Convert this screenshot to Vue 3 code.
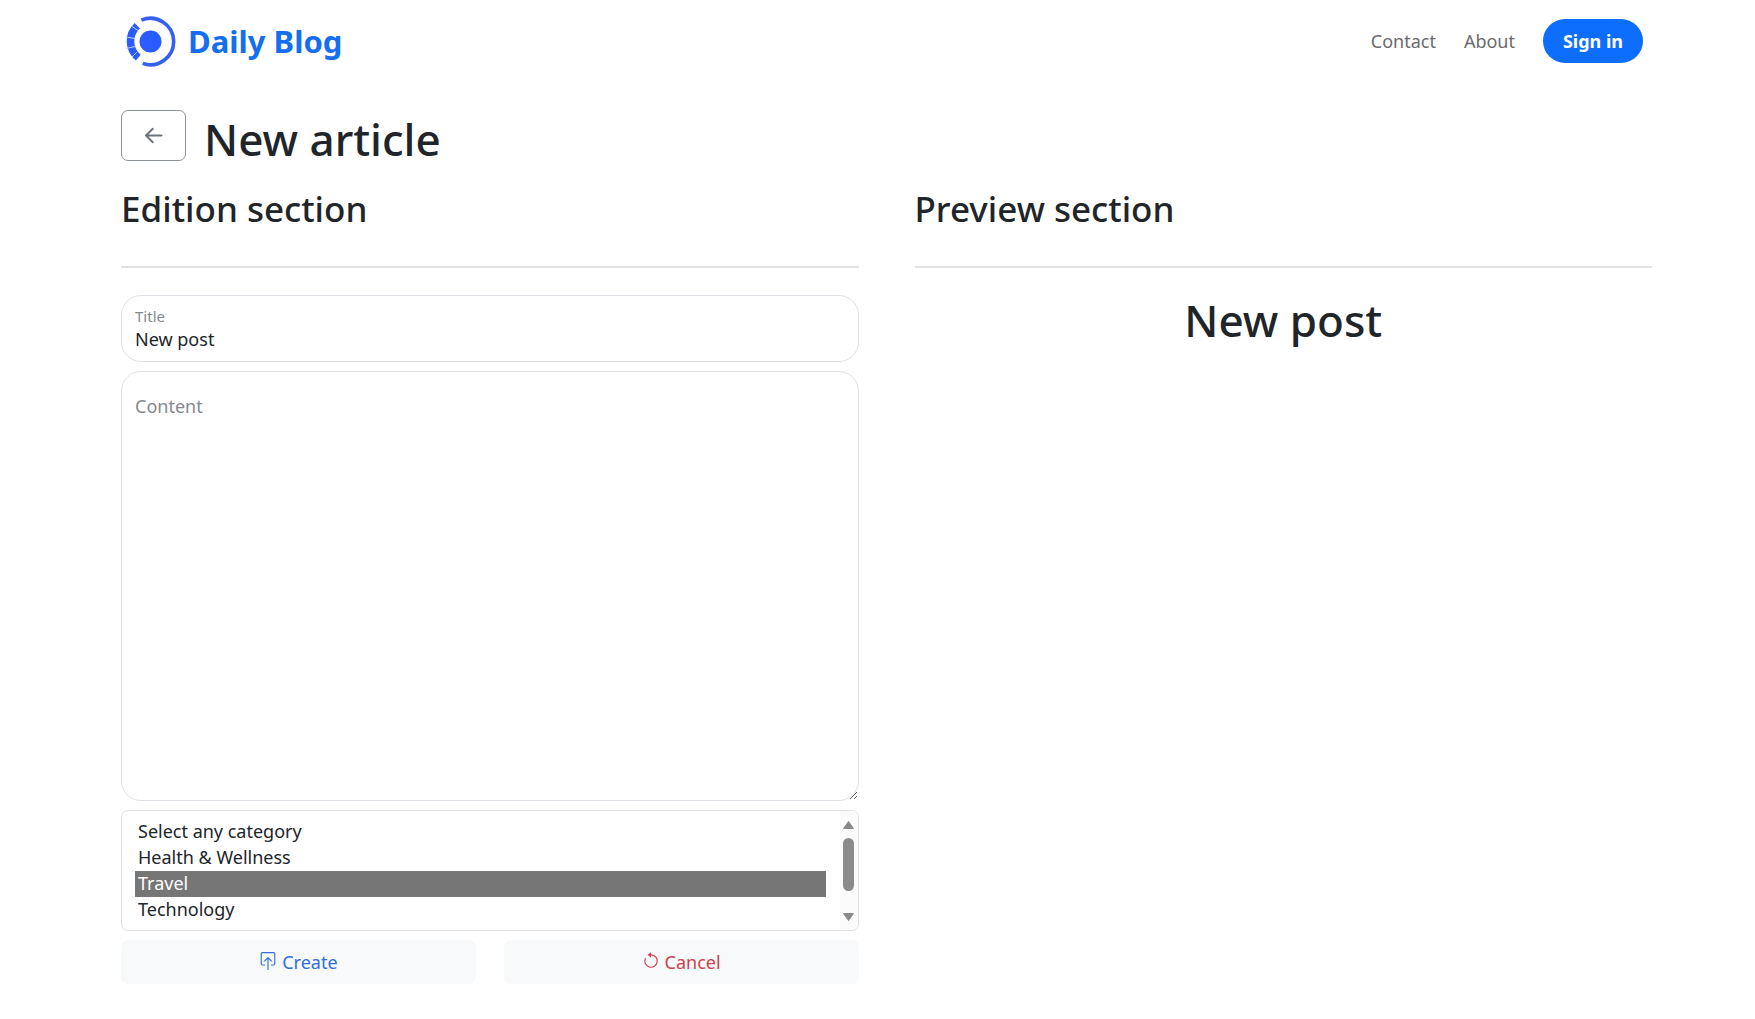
<script setup>
import { ref } from 'vue'

const title = ref('New post')
const content = ref('')
const category = ref('Travel')
const categories = ['Select any category', 'Health & Wellness', 'Travel', 'Technology', 'Sports', 'Food', 'Culture']
</script>

<template>
  <div class="page">
    <header class="navbar">
      <a class="brand" href="#">
        <svg class="logo" viewBox="0 0 52 52" aria-hidden="true">
          <circle cx="26.500" cy="26.500" r="11" fill="#2b5cff" />
          <path d="M17.300 5.200A23.200 23.200 0 1 1 18.700 48.400" fill="none" stroke="#3560f0" stroke-width="3.600" />
          <path d="M13.300 10.800A21 21 0 0 0 14.300 42.600" fill="none" stroke="#2b5cff" stroke-width="7.600" />
          <path d="M8 11.500l6 4M2 22l9 1.500M2 33.500l9-2M8 42l5-5" stroke="#b9c9ff" stroke-width="1" />
        </svg>
        <span>Daily Blog</span>
      </a>
      <nav class="links">
        <a href="#">Contact</a>
        <a href="#">About</a>
        <button class="signin" type="button">Sign in</button>
      </nav>
    </header>

    <main>
      <div class="heading">
        <button class="back" type="button" aria-label="Back">
          <svg width="20" height="20" viewBox="0 0 16 16" fill="none" stroke="#6c757d" stroke-width="1.600" stroke-linecap="round" stroke-linejoin="round" aria-hidden="true">
            <path d="M14 7.600H1.600M7 2.200L1.600 7.600L7 13" />
          </svg>
        </button>
        <h1>New article</h1>
      </div>

      <div class="columns">
        <section>
          <h2>Edition section</h2>
          <hr>
          <form @submit.prevent>
            <div class="field">
              <label class="small" for="title">Title</label>
              <input id="title" v-model="title" type="text">
            </div>
            <div class="field">
              <label v-if="!content" for="content">Content</label>
              <textarea id="content" v-model="content"></textarea>
            </div>
            <div class="listbox">
              <select v-model="category" size="4" aria-label="Category">
                <option v-for="name in categories" :key="name">{{ name }}</option>
              </select>
              <div class="scrollbar" aria-hidden="true">
                <svg width="13" height="10" viewBox="0 0 13 10"><path d="M6.500 1.500L11.500 8.500H1.500z" /></svg>
                <span class="thumb"></span>
                <svg width="13" height="10" viewBox="0 0 13 10"><path d="M6.500 8.500L11.500 1.500H1.500z" /></svg>
              </div>
            </div>
            <div class="actions">
              <button class="create" type="submit">
                <svg width="18" height="18" viewBox="0 0 16 16" fill="none" stroke="currentColor" stroke-linecap="round" stroke-linejoin="round" aria-hidden="true">
                  <path d="M5 11.500H3A1 1 0 0 1 2 10.500V1.500A1 1 0 0 1 3 .5h10A1 1 0 0 1 14 1.500v9a1 1 0 0 1-1 1h-2M8 15.500V5M5 8l3-3 3 3" />
                </svg>
                Create
              </button>
              <button class="cancel" type="reset">
                <svg width="18" height="18" viewBox="0 0 16 16" fill="currentColor" aria-hidden="true">
                  <path fill-rule="evenodd" d="M8 3a5 5 0 1 1-4.546 2.914.5.5 0 0 0-.908-.417A6 6 0 1 0 8 2z" />
                  <path d="M8 4.466V.534a.25.25 0 0 0-.41-.192L5.230 2.308a.25.25 0 0 0 0 .384l2.360 1.966A.25.25 0 0 0 8 4.466" />
                </svg>
                Cancel
              </button>
            </div>
          </form>
        </section>

        <section>
          <h2>Preview section</h2>
          <hr>
          <h1 class="preview">{{ title }}</h1>
        </section>
      </div>
    </main>
  </div>
</template>

<style>
body {
  margin: 0;
  background: #fff;
}
</style>

<style scoped>
* {
  box-sizing: border-box;
}

.page {
  padding: 0 103px 0 121px;
  color: #212529;
  font: 18px/28px "Segoe UI", "Noto Sans", sans-serif;
}

button,
input,
textarea,
select {
  margin: 0;
  color: inherit;
  font: inherit;
}

.navbar {
  display: flex;
  align-items: center;
  justify-content: space-between;
  height: 82px;
  padding: 0 9px 0 3px;
}

.brand {
  display: flex;
  align-items: center;
  gap: 12px;
  color: #146ef0;
  font-size: 31px;
  font-weight: 700;
  text-decoration: none;
}

.logo {
  width: 52px;
  height: 52px;
}

.links {
  display: flex;
  align-items: center;
  gap: 28px;
}

.links a {
  color: #6b6b6b;
  text-decoration: none;
}

.signin {
  width: 100px;
  height: 44px;
  padding: 0;
  border: 0;
  border-radius: 22px;
  background: #0d6efd;
  color: #fff;
  font-weight: 700;
}

.heading {
  display: flex;
  gap: 18px;
  margin-top: 28px;
}

.back {
  display: flex;
  align-items: center;
  justify-content: center;
  width: 65px;
  height: 51px;
  padding: 0;
  border: 1px solid #8d949a;
  border-radius: 7px;
  background: #fff;
}

h1,
h2 {
  margin: 0;
  font-weight: 500;
}

h1 {
  font-size: 44px;
  line-height: 58px;
}

h2 {
  font-size: 35px;
  line-height: 44px;
}

.columns {
  display: grid;
  grid-template-columns: 1fr 1fr;
  gap: 56px;
  margin-top: 19px;
}

hr {
  height: 2px;
  margin: 35px 0 27px;
  border: 0;
  background: #e0e1e2;
}

.field {
  position: relative;
  margin-bottom: 9px;
}

.field label {
  position: absolute;
  top: 21px;
  left: 14px;
  color: #85898c;
}

.field .small {
  top: 7px;
  font-size: 15px;
}

input,
textarea {
  display: block;
  width: 100%;
  border: 1px solid #dee2e6;
  border-radius: 20px;
  background: #fff;
  outline: 0;
}

input {
  height: 67px;
  padding: 24px 13px 4px;
}

textarea {
  height: 430px;
  padding: 30px 13px 14px;
  resize: vertical;
}

.listbox {
  position: relative;
  padding: 8px 32px 7px 13px;
  border: 1px solid #dee2e6;
  border-radius: 7px;
}

select {
  display: block;
  width: 100%;
  height: 104px;
  padding: 0;
  overflow-y: auto;
  border: 0;
  background: #fff;
  outline: 0;
  scrollbar-width: none;
}

option {
  min-height: 26px;
  padding: 0 3px;
  line-height: 26px;
}

option:checked {
  background: #767676 linear-gradient(#767676, #767676);
  color: #fff;
}

.scrollbar {
  position: absolute;
  inset: 0 0 0 auto;
  display: flex;
  flex-direction: column;
  align-items: center;
  width: 18px;
  padding: 9px 0 8px;
  border-radius: 0 6px 6px 0;
  background: #fbfbfb;
}

.scrollbar path {
  fill: #8b8b8b;
  stroke: #8b8b8b;
  stroke-linejoin: round;
}

.thumb {
  width: 11px;
  height: 53px;
  margin: 8px 0 auto;
  border-radius: 6px;
  background: #8b8b8b;
}

.actions {
  display: grid;
  grid-template-columns: 1fr 1fr;
  gap: 28px;
  margin-top: 9px;
}

.actions button {
  display: flex;
  align-items: center;
  justify-content: center;
  gap: 5px;
  height: 44px;
  border: 0;
  border-radius: 7px;
  background: #f8f9fa;
}

.actions svg {
  margin-bottom: 2px;
}

.actions .create {
  color: #2f6fdc;
}

.actions .cancel {
  color: #cf4050;
}

.preview {
  line-height: 50px;
  text-align: center;
}
</style>
